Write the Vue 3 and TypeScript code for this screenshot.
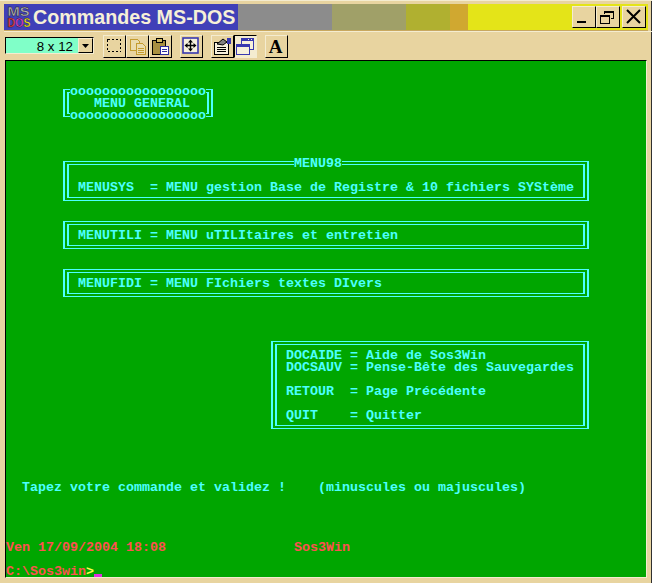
<script setup lang="ts">
interface Cell { row: number; col: number; text: string; kind?: string }

const segments = [
  { color: '#8c8c8c', width: 94 },
  { color: '#a0a068', width: 74 },
  { color: '#b0b030', width: 44 },
  { color: '#d0a830', width: 18 },
];

const frames = [
  { id: 'general', row: 3, rows: 3, col: 7, cols: 19 },
  { id: 'menu98', row: 9, rows: 4, col: 7, cols: 66 },
  { id: 'menutili', row: 14, rows: 3, col: 7, cols: 66 },
  { id: 'menufidi', row: 18, rows: 3, col: 7, cols: 66 },
  { id: 'doc', row: 24, rows: 8, col: 33, cols: 40 },
];

const cells: Cell[] = [
  { row: 3, col: 8, text: 'ooooooooooooooooo', kind: 'mask' },
  { row: 4, col: 11, text: 'MENU GENERAL' },
  { row: 5, col: 8, text: 'ooooooooooooooooo', kind: 'mask' },
  { row: 9, col: 36, text: 'MENU98', kind: 'mask' },
  { row: 11, col: 9, text: 'MENUSYS  = MENU gestion Base de Registre & 10 fichiers SYStème' },
  { row: 15, col: 9, text: 'MENUTILI = MENU uTILItaires et entretien' },
  { row: 19, col: 9, text: 'MENUFIDI = MENU FIchiers textes DIvers' },
  { row: 25, col: 35, text: 'DOCAIDE = Aide de Sos3Win' },
  { row: 26, col: 35, text: 'DOCSAUV = Pense-Bête des Sauvegardes' },
  { row: 28, col: 35, text: 'RETOUR  = Page Précédente' },
  { row: 30, col: 35, text: 'QUIT    = Quitter' },
  { row: 36, col: 2, text: 'Tapez votre commande et validez !    (minuscules ou majuscules)' },
  { row: 41, col: 0, text: 'Ven 17/09/2004 18:08', kind: 'red' },
  { row: 41, col: 36, text: 'Sos3Win', kind: 'red' },
  { row: 43, col: 0, text: 'C:\\Sos3win', kind: 'red' },
  { row: 43, col: 10, text: '>', kind: 'gt' },
];

function place(row: number, rows: number, col: number, cols: number) {
  return { gridRow: `${row} / span ${rows}`, gridColumn: `${col + 1} / span ${cols}` };
}
</script>

<template>
  <div class="win">
    <div class="title">
      <div class="blue">
        <svg class="logo" width="24" height="26" viewBox="0 0 24 26">
          <text x="0.5" y="11.5" font-family="Liberation Sans" font-size="13" font-weight="700" textLength="22" lengthAdjust="spacingAndGlyphs" fill="#b4b4b4" stroke="#181818" stroke-width="0.4">MS</text>
          <text x="0.5" y="23" font-family="Liberation Sans" font-size="13" font-weight="700" textLength="23" lengthAdjust="spacingAndGlyphs" stroke="#181818" stroke-width="0.4"><tspan fill="#f04040">D</tspan><tspan fill="#e040d0">O</tspan><tspan fill="#f4ec20">S</tspan></text>
        </svg>
        <span class="caption">Commandes MS-DOS</span>
      </div>
      <i v-for="s in segments" :key="s.color" class="seg" :style="{ width: s.width + 'px', background: s.color }"></i>
      <div class="bright">
        <button class="ctrl"><svg width="22" height="20" viewBox="0 0 22 20"><rect x="4" y="14" width="9" height="2" fill="#000" /></svg></button>
        <button class="ctrl"><svg width="22" height="20" viewBox="0 0 22 20" fill="none" stroke="#000" shape-rendering="crispEdges"><path d="M7.5 7V4.5H16.5V11.5H13.5M7.5 5.5H16.5" /><rect x="3.5" y="8.5" width="9" height="8" /><path d="M3.5 9.5H12.5" /></svg></button>
        <button class="ctrl close"><svg width="22" height="20" viewBox="0 0 22 20" stroke="#000" stroke-width="2"><path d="M4 3L17 16M17 3L4 16" /></svg></button>
      </div>
    </div>

    <div class="tools">
      <div class="combo">
        <span class="cval">8 x 12</span>
        <span class="cbtn"><svg width="7" height="4" viewBox="0 0 7 4"><path d="M0 0H7L3.5 4Z" fill="#000" /></svg></span>
      </div>
      <div class="tbtn first"><svg width="21" height="21" viewBox="0 0 21 21" fill="none" stroke="#000" stroke-dasharray="2 2" shape-rendering="crispEdges"><rect x="3.5" y="3.5" width="13" height="12" /></svg></div>
      <div class="tbtn"><svg width="21" height="21" viewBox="0 0 21 21" fill="#eadcae" stroke="#c49c30" shape-rendering="crispEdges"><path d="M3.5 3.5H10.5L12.5 5.5V14.5H3.5Z" /><path d="M9.5 7.5H15.5L18.5 10.5V18.5H9.5Z" /><path d="M11 12.5H17M11 14.5H17M11 16.5H17" /></svg></div>
      <div class="tbtn"><svg width="21" height="21" viewBox="0 0 21 21" shape-rendering="crispEdges"><rect x="2.5" y="4.5" width="13" height="14" fill="#a89040" stroke="#000" /><rect x="6.5" y="2.5" width="6" height="4" fill="#d0b860" stroke="#000" /><rect x="10.5" y="10.5" width="8" height="8" fill="#fff" stroke="#2c2ca0" /><path d="M12 13.5H17M12 15.5H17" stroke="#2c2ca0" /></svg></div>
      <div class="tbtn gap"><svg width="21" height="21" viewBox="0 0 21 21"><rect x="2" y="2" width="15" height="15" fill="#f6f0dc" stroke="#3838b0" stroke-width="1.6" /><path d="M9.5 3.5L12 6.5H7ZM9.5 15.5L7 12.5H12ZM3.5 9.5L6.5 7V12ZM15.5 9.5L12.5 12V7Z" fill="#000" /><path d="M9.5 6V13M6 9.5H13" stroke="#000" stroke-width="1.4" /></svg></div>
      <div class="tbtn gap"><svg width="21" height="21" viewBox="0 0 21 21" shape-rendering="crispEdges"><rect x="2.5" y="6.5" width="14" height="12" fill="#f6f0dc" stroke="#000" /><path d="M5 11.5H14M5 13.5H14M5 15.5H14" stroke="#000" /><path d="M5 8L11 3L15 6L11 9Z" fill="#808080" stroke="#000" shape-rendering="geometricPrecision" /><rect x="15" y="2" width="4" height="6" fill="#3838b0" /></svg></div>
      <div class="tbtn on"><svg width="21" height="21" viewBox="0 0 21 21" shape-rendering="crispEdges"><rect x="6.5" y="2.5" width="12" height="11" fill="#f6f0dc" stroke="#3838b0" /><rect x="6" y="2" width="13" height="3" fill="#3838b0" /><path d="M13 3H14M15.5 3H16.5M14 6H15" stroke="#f6f0dc" /><rect x="1.5" y="8.5" width="13" height="10" fill="#f6f0dc" stroke="#3838b0" /><rect x="1" y="8" width="14" height="3" fill="#3838b0" /></svg></div>
      <div class="tbtn gap a">A</div>
    </div>

    <div class="dos">
      <div v-for="f in frames" :key="f.id" class="frame" :style="place(f.row, f.rows, f.col, f.cols)">
        <div class="inner"></div>
      </div>
      <div
        v-for="c in cells"
        :key="c.row + '-' + c.col"
        class="cell"
        :class="c.kind"
        :style="place(c.row, 1, c.col, c.text.length)"
      >{{ c.text }}</div>
      <i class="cursor"></i>
    </div>
  </div>
</template>

<style>
html, body { margin: 0; background: #e8d4a0; }
</style>

<style scoped>
.win { width: 652px; height: 583px; box-sizing: border-box; background: #e8d4a0; padding: 4px 0 0 4px; overflow: hidden; box-shadow: inset 0 1px 0 #f4ecd0, inset -1px 0 0 #303030; }
.title { width: 644px; height: 27px; box-sizing: border-box; display: flex; border-bottom: 1px solid #c8a860; }
.blue { width: 234px; flex: none; display: flex; align-items: center; background: #4040b8; padding-left: 3px; box-sizing: border-box; }
.logo { flex: none; overflow: visible; }
.caption { margin-left: 2px; color: #f6f0d8; font: 700 19.7px/26px "Liberation Sans", sans-serif; white-space: nowrap; }
.seg { display: block; flex: none; }
.bright { flex: 1; background: #e4e418; display: flex; justify-content: flex-end; align-items: center; padding-right: 2px; }
.ctrl { width: 24px; height: 22px; box-sizing: border-box; padding: 0; background: #e8d4a0; border: 1px solid; border-color: #f4ecd0 #000 #000 #f4ecd0; display: flex; align-items: center; justify-content: center; }
.close { margin-left: 2px; }
.tools { height: 29px; box-sizing: border-box; border-top: 1px solid #f4ecd0; display: flex; align-items: flex-start; padding-top: 3px; }
.combo { width: 89px; height: 17px; box-sizing: border-box; display: flex; margin: 2px 0 0 1px; border: 1px solid; border-color: #000 #f4ecd0 #f4ecd0 #000; }
.cval { flex: 1; background: #80ffc8; color: #000; font: 13.33px/17px "Liberation Sans", sans-serif; text-align: right; padding-right: 5px; white-space: nowrap; }
.cbtn { width: 15px; box-sizing: border-box; display: flex; align-items: center; justify-content: center; background: #e8d4a0; border: 1px solid; border-color: #f4ecd0 #000 #000 #f4ecd0; }
.tbtn { width: 23px; height: 23px; box-sizing: border-box; display: flex; align-items: center; justify-content: center; background: #e8d4a0; border: 1px solid; border-color: #f4ecd0 #000 #000 #f4ecd0; }
.tbtn.first { margin-left: 9px; }
.tbtn.gap { margin-left: 8px; }
.tbtn.on { border-color: #000 #f4ecd0 #f4ecd0 #000; background: #f4ecd0; }
.a { font: 700 19px/20px "Liberation Serif", serif; color: #000; padding-right: 2px; }
.dos { width: 640px; height: 516px; margin-left: 1px; background: #00a600; border-left: 1px solid #000; border-top: 1px solid #000; border-right: 1px solid #f4ecd0; border-bottom: 1px solid #f4ecd0; display: grid; grid-template-columns: repeat(80, 8px); grid-template-rows: repeat(43, 12px); color: #4cffff; font: 700 13.33px/14px "Liberation Mono", monospace; white-space: pre; }
.frame { margin: 4px 1px; box-sizing: border-box; display: grid; padding: 2px; border: solid #4cffff; border-width: 1px 2px; }
.inner { border: solid #4cffff; border-width: 1px 2px; }
.cell { min-width: 0; height: 12px; }
.mask { background: #00a600; }
.red { color: #ff5050; }
.gt { color: #ffff50; }
.cursor { grid-row: 43; grid-column: 12; align-self: end; display: block; height: 3px; background: #e030e0; }
</style>
